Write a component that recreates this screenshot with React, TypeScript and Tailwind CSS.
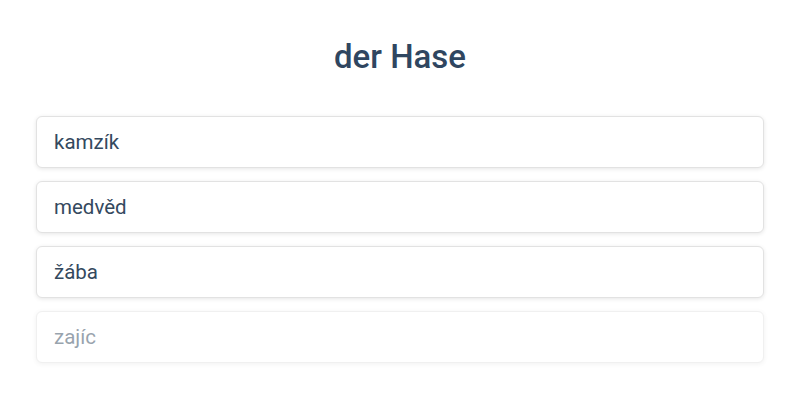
export default function App() {
  const words = ['kamzík', 'medvěd', 'žába'];

  return (
    <div className="min-h-screen bg-white px-9 pt-[37px]" style={{ fontFamily: 'Roboto, "Noto Sans", sans-serif' }}>
      <h1 className="text-center text-[33px] leading-10 font-medium text-[#2f4660]">der Hase</h1>
      <div className="mt-[39px] flex flex-col gap-[13px]">
        {words.map((w) => (
          <div
            key={w}
            className="h-[52px] flex items-center px-[17px] rounded-md border border-[#e2e2e2] bg-white shadow-[0_1px_4px_rgba(0,0,0,0.1)] text-[20.5px] text-[#34495e]"
          >
            {w}
          </div>
        ))}
        <div className="h-[52px] flex items-center px-[17px] rounded-md border border-[#e2e2e2] bg-white shadow-[0_1px_4px_rgba(0,0,0,0.1)] text-[20.5px] text-[#34495e] opacity-50">
          zajíc
        </div>
      </div>
    </div>
  );
}
